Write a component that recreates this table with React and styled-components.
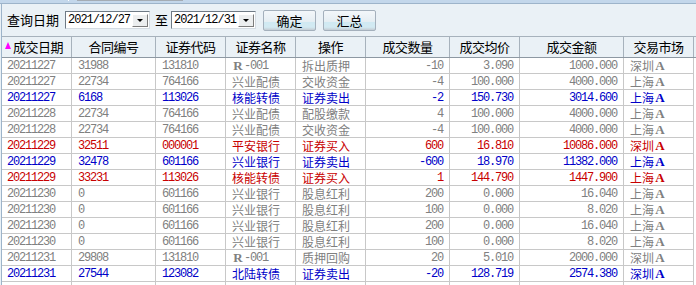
import styled, { createGlobalStyle } from 'styled-components';

const GlobalStyle = createGlobalStyle`
  html, body {
    margin: 0;
    padding: 0;
    background: #eaf1f6;
  }
`;

const COLS = '70px 84px 70px 70px 70px 84px 70px 104px 70px';
const MONO = "'Liberation Mono', monospace";

const Screen = styled.div`
  width: 696px;
  height: 285px;
  overflow: hidden;
  background: #eaf1f6;
  font-family: 'Noto Sans CJK SC', sans-serif;
  font-size: 12px;
  color: #000;
`;

const TopStrip = styled.div`
  height: 3px;
  background: #c3d7eb;
  border-bottom: 1px solid #9db4ca;
  display: flex;
  align-items: flex-start;
`;

const TabMark = styled.div`
  width: ${(p) => p.$w}px;
  height: ${(p) => p.$h}px;
  margin-left: ${(p) => p.$ml}px;
  background: ${(p) => p.$bg};
`;

const Panel = styled.div`
  margin-left: 1px;
  border-left: 1px solid #9db4ca;
  height: 281px;
`;

const Toolbar = styled.div`
  height: 32px;
  display: flex;
  align-items: center;
  padding-left: 5px;
`;

const Label = styled.span`
  font-size: 13px;
  line-height: 16px;
  margin-right: ${(p) => p.$mr}px;
  margin-left: ${(p) => p.$ml || 0}px;
`;

const Combo = styled.div`
  width: 85px;
  height: 18px;
  box-sizing: border-box;
  background: #fff;
  border: 1px solid #6f7a85;
  border-right-color: #d4dbe2;
  border-bottom-color: #d4dbe2;
  display: flex;
  align-items: center;
  justify-content: space-between;
  padding: 0 1px 0 2px;
  font-family: ${MONO};
  font-size: 12px;
  line-height: 14px;
  letter-spacing: -1px;
`;

const DropBtn = styled.div`
  width: 16px;
  height: 13px;
  box-sizing: border-box;
  background: #eceeef;
  border: 1px solid #fff;
  border-right-color: #7c7c7c;
  border-bottom-color: #7c7c7c;
  display: flex;
  align-items: center;
  justify-content: center;
  &::after {
    content: '';
    border-left: 3px solid transparent;
    border-right: 3px solid transparent;
    border-top: 3px solid #000;
    margin-top: 1px;
  }
`;

const Button = styled.button`
  width: 53px;
  height: 21px;
  margin-left: ${(p) => p.$ml}px;
  padding: 0;
  border: 1px solid #a4b0bc;
  border-radius: 2px;
  background: linear-gradient(
    #f3f7fa 0%,
    #e6eef3 55%,
    #d0e9f2 60%,
    #d3eaf2 85%,
    #c4ccd3 100%
  );
  font-family: 'Noto Sans CJK SC', sans-serif;
  font-size: 13px;
  color: #000;
  line-height: 17px;
`;

const Grid = styled.div`
  display: flex;
  flex-direction: column;
  width: 694px;
`;

const HeadRow = styled.div`
  display: grid;
  grid-template-columns: ${COLS};
  height: 22px;
  box-sizing: border-box;
  border-top: 1px solid #a7b2bc;
  border-bottom: 1px solid #8d98a2;
  background: #eaf1f6;
`;

const HeadCell = styled.div`
  border-right: 1px solid #a7b2bc;
  display: flex;
  align-items: center;
  justify-content: center;
  font-size: 13px;
  line-height: 16px;
  letter-spacing: -0.5px;
  ${(p) => p.$sorted && 'justify-content: flex-start; padding-left: 3px;'}
`;

const SortArrow = styled.span`
  width: 0;
  height: 0;
  border-left: 3.5px solid transparent;
  border-right: 3.5px solid transparent;
  border-bottom: 7px solid #ff00ff;
  margin-right: 2px;
  margin-top: -3px;
`;

const palette = { g: '#808080', b: '#0000c8', r: '#c80000' };

const Row = styled.div`
  display: grid;
  grid-template-columns: ${COLS};
  height: 16px;
  background: #fff;
  color: ${(p) => palette[p.$tone]};
`;

const Cell = styled.div`
  box-sizing: border-box;
  border-right: 1px solid #c8c8c8;
  border-bottom: 1px solid #c8c8c8;
  display: flex;
  align-items: center;
  justify-content: ${(p) => (p.$right ? 'flex-end' : 'flex-start')};
  padding: ${(p) => (p.$right ? '0 6px 0 0' : '0 0 0 6px')};
  padding-top: 1px;
  white-space: nowrap;
  font-family: ${(p) => (p.$num ? MONO : "'Noto Sans CJK SC', sans-serif")};
  font-size: 12px;
  line-height: 14px;
  letter-spacing: ${(p) => (p.$num ? '-1.2px' : '0')};
  ${(p) => p.$first && 'padding-left: 5px;'}
`;

const Latin = styled.span`
  font-family: 'Liberation Serif', serif;
  font-weight: bold;
  font-size: 13px;
  letter-spacing: 0;
  display: inline-block;
  width: ${(p) => p.$w}px;
  text-align: center;
`;

const Dash = styled.span`
  font-family: ${MONO};
  font-size: 12px;
  letter-spacing: -1.2px;
`;

const headers = ['成交日期', '合同编号', '证券代码', '证券名称', '操作', '成交数量', '成交均价', '成交金额', '交易市场'];

const rows = [
  ['g', '20211227', '31988', '131810', 'R-001', '拆出质押', '-10', '3.090', '1000.000', '深圳'],
  ['g', '20211227', '22734', '764166', '兴业配债', '交收资金', '-4', '100.000', '4000.000', '上海'],
  ['b', '20211227', '6168', '113026', '核能转债', '证券卖出', '-2', '150.730', '3014.600', '上海'],
  ['g', '20211228', '22734', '764166', '兴业配债', '配股缴款', '4', '100.000', '4000.000', '上海'],
  ['g', '20211228', '22734', '764166', '兴业配债', '交收资金', '-4', '100.000', '4000.000', '上海'],
  ['r', '20211229', '32511', '000001', '平安银行', '证券买入', '600', '16.810', '10086.000', '深圳'],
  ['b', '20211229', '32478', '601166', '兴业银行', '证券卖出', '-600', '18.970', '11382.000', '上海'],
  ['r', '20211229', '33231', '113026', '核能转债', '证券买入', '1', '144.790', '1447.900', '上海'],
  ['g', '20211230', '0', '601166', '兴业银行', '股息红利', '200', '0.000', '16.040', '上海'],
  ['g', '20211230', '0', '601166', '兴业银行', '股息红利', '100', '0.000', '8.020', '上海'],
  ['g', '20211230', '0', '601166', '兴业银行', '股息红利', '200', '0.000', '16.040', '上海'],
  ['g', '20211230', '0', '601166', '兴业银行', '股息红利', '100', '0.000', '8.020', '上海'],
  ['g', '20211231', '29808', '131810', 'R-001', '质押回购', '20', '5.010', '2000.000', '深圳'],
  ['b', '20211231', '27544', '123082', '北陆转债', '证券卖出', '-20', '128.719', '2574.380', '深圳'],
];

const Name = ({ value }) =>
  value.startsWith('R-') ? (
    <>
      <Latin $w={12}>R</Latin>
      <Dash>{value.slice(1)}</Dash>
    </>
  ) : (
    value
  );

const App = () => (
  <Screen>
    <GlobalStyle />
    <TopStrip>
      <TabMark $ml={68} $w={1} $h={1} $bg="#ffffff" />
      <TabMark $ml={8} $w={106} $h={1} $bg="#a4acb4" />
    </TopStrip>
    <Panel>
      <Toolbar>
        <Label $mr={6}>查询日期</Label>
        <Combo>
          <span>2021/12/27</span>
          <DropBtn />
        </Combo>
        <Label $ml={5} $mr={3}>至</Label>
        <Combo>
          <span>2021/12/31</span>
          <DropBtn />
        </Combo>
        <Button $ml={7}>确定</Button>
        <Button $ml={7}>汇总</Button>
      </Toolbar>
      <Grid>
        <HeadRow>
          {headers.map((h, i) => (
            <HeadCell key={h} $sorted={i === 0}>
              {i === 0 && <SortArrow />}
              {h}
            </HeadCell>
          ))}
        </HeadRow>
        {rows.map(([tone, date, id, code, name, op, qty, price, amount, market], i) => (
          <Row key={i} $tone={tone}>
            <Cell $num $first>{date}</Cell>
            <Cell $num>{id}</Cell>
            <Cell $num>{code}</Cell>
            <Cell>
              <Name value={name} />
            </Cell>
            <Cell>{op}</Cell>
            <Cell $num $right>{qty}</Cell>
            <Cell $num $right>{price}</Cell>
            <Cell $num $right>{amount}</Cell>
            <Cell>
              {market}
              <Latin $w={12}>A</Latin>
            </Cell>
          </Row>
        ))}
        <Row $tone="g">
          {headers.map((h) => (
            <Cell key={h} />
          ))}
        </Row>
      </Grid>
    </Panel>
  </Screen>
);

export default App;
